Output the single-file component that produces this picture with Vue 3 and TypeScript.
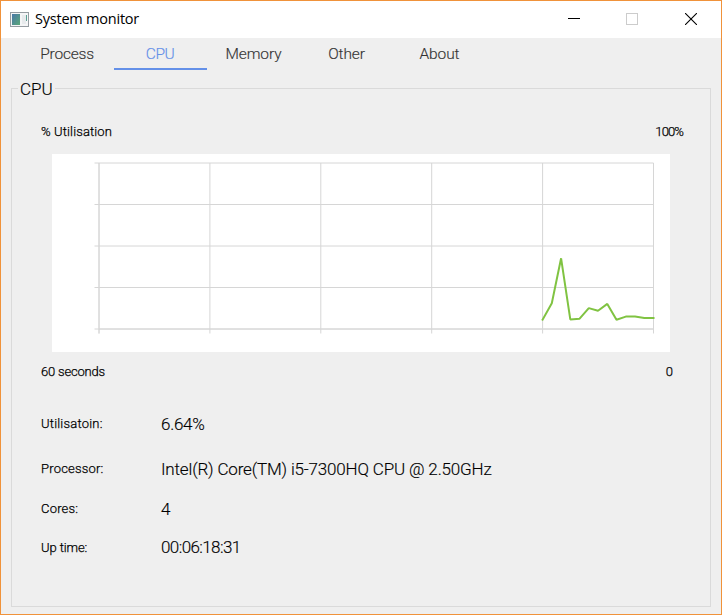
<script setup lang="ts">
import { ref } from 'vue'

interface Tab { id: string; label: string }
interface Detail { id: string; label: string; value: string }

const tabs: Tab[] = [
  { id: 'process', label: 'Process' },
  { id: 'cpu', label: 'CPU' },
  { id: 'memory', label: 'Memory' },
  { id: 'other', label: 'Other' },
  { id: 'about', label: 'About' },
]
const active = ref('cpu')

const details: Detail[] = [
  { id: 'utilisation', label: 'Utilisatoin:', value: '6.64%' },
  { id: 'processor', label: 'Processor:', value: 'Intel(R) Core(TM) i5-7300HQ CPU @ 2.50GHz' },
  { id: 'cores', label: 'Cores:', value: '4' },
  { id: 'uptime', label: 'Up time:', value: '00:06:18:31' },
]

const plot = { left: 47, right: 601.5, top: 9, bottom: 175 }
const columns = [0, 1, 2, 3, 4, 5].map(i => plot.left + i * (plot.right - plot.left) / 5)
const rows = [0, 1, 2, 3, 4].map(i => plot.top + i * (plot.bottom - plot.top) / 4)

// Utilisation samples in percent, the newest one last.
const samples = [5.6, 15.5, 42.6, 5.8, 6.2, 12.6, 11, 15.1, 5.6, 7.5, 7.5, 6.64, 6.64]
const step = (plot.right - plot.left) / 60
const series = samples
  .map((v, i) => {
    const x = plot.right - (samples.length - 1 - i) * step
    const y = plot.bottom - (v / 100) * (plot.bottom - plot.top)
    return `${x.toFixed(1)},${y.toFixed(1)}`
  })
  .join(' ')
</script>

<template>
  <div class="window">
    <header class="titlebar">
      <svg class="app-icon" width="19" height="15" viewBox="0 0 19 15">
        <defs>
          <linearGradient id="pane" x1="0" y1="0" x2="1" y2="1">
            <stop offset="0" stop-color="#4a78a8" />
            <stop offset="1" stop-color="#5aa878" />
          </linearGradient>
        </defs>
        <rect x="0.5" y="0.5" width="18" height="14" fill="#f4f5f6" stroke="#959ca1" />
        <rect x="2" y="2" width="8" height="11" fill="url(#pane)" />
        <rect x="12" y="3" width="4" height="9" fill="#e7eaec" />
        <rect x="16" y="3" width="1" height="6" fill="#5aa093" />
      </svg>
      <span class="title">System monitor</span>
      <div class="controls">
        <svg width="12" height="12" viewBox="0 0 12 12"><path d="M0 5.5H12" stroke="#000" /></svg>
        <svg width="12" height="12" viewBox="0 0 12 12"><rect x="0.5" y="0.5" width="11" height="11" fill="none" stroke="#ccc" /></svg>
        <svg class="close" width="12" height="12" viewBox="0 0 12 12"><path d="M0 0L12 12M12 0L0 12" stroke="#000" stroke-width="1.1" /></svg>
      </div>
    </header>

    <nav class="tabs">
      <button
        v-for="tab in tabs"
        :key="tab.id"
        class="tab"
        :class="[tab.id, { active: tab.id === active }]"
        @click="active = tab.id"
      >{{ tab.label }}</button>
    </nav>

    <fieldset class="group">
      <legend>CPU</legend>
      <div class="scale top">
        <span class="util">% Utilisation</span>
        <span class="max">100%</span>
      </div>
      <svg class="chart" width="618" height="198" viewBox="0 0 618 198">
        <g stroke="#d6d6d6" stroke-width="1">
          <line v-for="(x, i) in columns" :key="'c' + i" :x1="x" :x2="x" :y1="plot.top" :y2="plot.bottom + 4.5" />
          <line v-for="(y, i) in rows" :key="'r' + i" :x1="plot.left - 4.5" :x2="plot.right" :y1="y" :y2="y" />
          <line :x1="plot.left" :x2="plot.left" :y1="plot.top" :y2="plot.bottom + 4.5" />
          <line :x1="plot.left" :x2="plot.right" :y1="plot.bottom" :y2="plot.bottom" />
        </g>
        <polyline :points="series" fill="none" stroke="#80c342" stroke-width="2" stroke-linecap="square" stroke-linejoin="bevel" />
      </svg>
      <div class="scale bottom">
        <span class="span">60 seconds</span>
        <span>0</span>
      </div>
      <dl class="details">
        <template v-for="d in details" :key="d.id">
          <dt :class="d.id">{{ d.label }}</dt>
          <dd :class="d.id">{{ d.value }}</dd>
        </template>
      </dl>
    </fieldset>
  </div>
</template>

<style>
body {
  margin: 0;
}
</style>

<style scoped>
.window {
  box-sizing: border-box;
  display: flex;
  flex-direction: column;
  width: 722px;
  height: 615px;
  border: 1px solid #f0923a;
  background: #efefef;
  color: #000;
  font-family: Roboto, "Liberation Sans", sans-serif;
  font-weight: 300;
}
.titlebar {
  display: flex;
  align-items: center;
  box-sizing: border-box;
  height: 37px;
  padding: 0 24px 2px 9px;
  background: #fff;
}
.app-icon {
  margin: 1px 6px 0 0;
}
.title {
  padding-top: 1px;
  font: 400 14.5px/20px "Open Sans", "Noto Sans", sans-serif;
  letter-spacing: -0.22px;
}
.controls {
  display: flex;
  gap: 46px;
  margin-left: auto;
}
.controls svg {
  display: block;
}
.controls .close {
  margin-left: 1px;
}
.tabs {
  display: flex;
  height: 32px;
  padding-left: 20px;
}
.tab {
  box-sizing: border-box;
  width: 93px;
  padding: 2px 0 0;
  border: 0;
  border-bottom: 2px solid transparent;
  background: none;
  color: #333;
  font: 300 15.5px/28px Roboto, "Liberation Sans", sans-serif;
  letter-spacing: -0.1px;
  -webkit-text-stroke: 0.15px currentColor;
}
.tab.process {
  padding-right: 1px;
  letter-spacing: -0.2px;
}
.tab.cpu {
  padding-right: 1px;
  letter-spacing: -0.5px;
}
.tab.active {
  border-bottom-color: #6490e8;
  color: #6490e8;
}
.group {
  box-sizing: border-box;
  width: 700px;
  height: 529px;
  margin: 8px 0 0 10px;
  padding: 0;
  border: 1px solid #dadada;
}
.group legend {
  height: 20px;
  margin-left: 6px;
  padding: 0 2px;
  font-size: 17px;
  line-height: 22px;
  -webkit-text-stroke: 0.15px currentColor;
}
.scale {
  display: flex;
  justify-content: space-between;
  font-size: 13px;
  line-height: 16px;
  -webkit-text-stroke: 0.25px currentColor;
}
.scale.top {
  padding: 26px 27px 14px 29px;
}
.scale.bottom {
  padding: 12px 37px 0 29px;
}
.util {
  letter-spacing: 0.13px;
}
.max {
  letter-spacing: -0.9px;
}
.span {
  letter-spacing: -0.2px;
}
.chart {
  display: block;
  margin-left: 40px;
  background: #fff;
}
.details {
  display: grid;
  grid-template-columns: 120px 1fr;
  grid-template-rows: 45px 45px 35px 42px;
  align-items: center;
  margin: 21px 0 0 29px;
}
dt {
  font-size: 13px;
  letter-spacing: 0.2px;
  -webkit-text-stroke: 0.25px currentColor;
}
dt.uptime {
  letter-spacing: -0.1px;
}
dd {
  margin: 0;
  font-size: 17px;
  -webkit-text-stroke: 0.15px currentColor;
}
dd.utilisation {
  letter-spacing: -0.3px;
}
dd.processor {
  letter-spacing: -0.16px;
}
dd.uptime {
  letter-spacing: -0.6px;
}
</style>
